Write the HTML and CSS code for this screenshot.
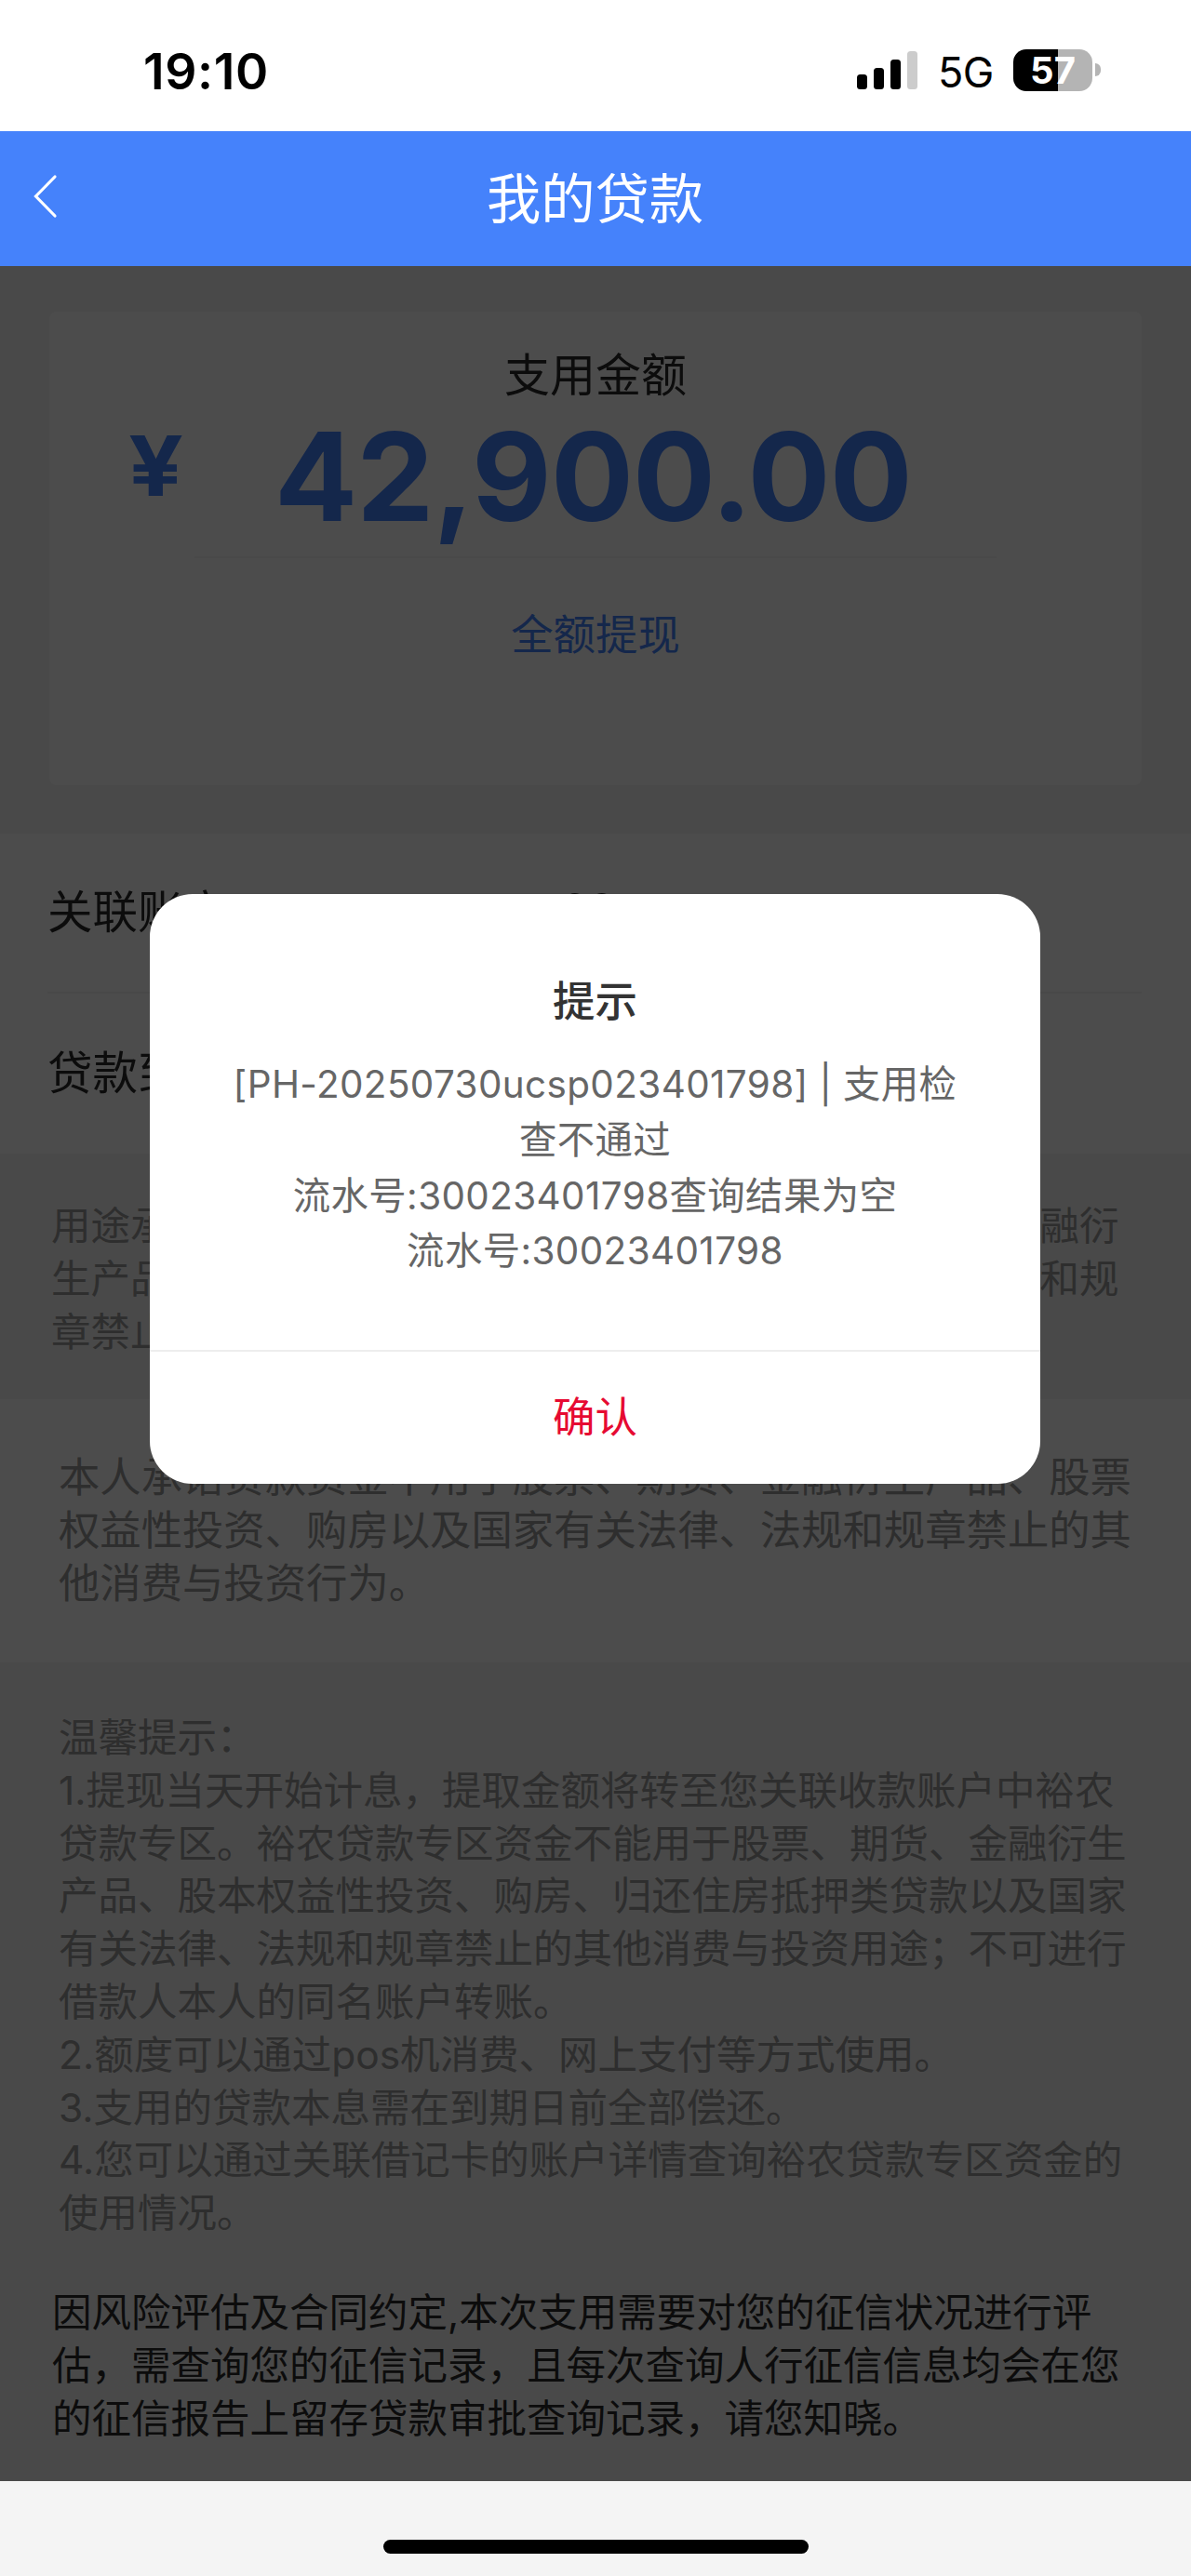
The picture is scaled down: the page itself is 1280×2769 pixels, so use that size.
FILE: index.html
```html
<!DOCTYPE html>
<html lang="zh-CN">
<head>
<meta charset="utf-8">
<title>我的贷款</title>
<link rel="stylesheet" href="styles.css">
</head>
<body>
<div class="statusbar">
  <span class="time">19:10</span>
  <div class="indicators">
    <svg class="signal" width="66" height="42" viewBox="0 0 66 42"><rect x="0" y="25" width="11" height="16" rx="3.5"/><rect x="18" y="18" width="11" height="23" rx="3.5"/><rect x="36" y="9" width="11" height="32" rx="3.5"/><rect x="54" y="0" width="11" height="41" rx="3.5" fill="#ccc"/></svg>
    <span class="network">5G</span>
    <span class="battery">57</span>
    <i class="nub"></i>
  </div>
</div>
<header class="navbar">
  <svg class="back" width="26" height="48" viewBox="0 0 26 48"><path d="M23 3 2.5 24 23 45" fill="none" stroke="#fff" stroke-width="3.2" stroke-linecap="round"/></svg>
  <h1>我的贷款</h1>
</header>
<main class="page">
  <section class="amount-area">
    <div class="card">
      <div class="label">支用金额</div>
      <div class="amount"><span class="yen">¥</span><span class="value">42,900.00</span></div>
      <div class="withdraw">全额提现</div>
    </div>
  </section>
  <section class="fields">
    <div class="field"><span>关联账户</span><span class="field-value">62</span></div>
    <div class="field"><span>贷款到期日</span></div>
  </section>
  <p class="pledge">用途承诺：本人承诺该笔贷款资金不用于股票、期货、金融衍<br>生产品、股本权益性投资、购房以及国家有关法律、法规和规<br>章禁止的其他消费与投资行为。</p>
  <p class="statement">本人承诺贷款资金不用于股票、期货、金融衍生产品、股票<br>权益性投资、购房以及国家有关法律、法规和规章禁止的其<br>他消费与投资行为。</p>
  <p class="tips">温馨提示：<br>1.提现当天开始计息，提取金额将转至您关联收款账户中裕农<br>贷款专区。裕农贷款专区资金不能用于股票、期货、金融衍生<br>产品、股本权益性投资、购房、归还住房抵押类贷款以及国家<br>有关法律、法规和规章禁止的其他消费与投资用途；不可进行<br>借款人本人的同名账户转账。<br>2.额度可以通过pos机消费、网上支付等方式使用。<br>3.支用的贷款本息需在到期日前全部偿还。<br>4.您可以通过关联借记卡的账户详情查询裕农贷款专区资金的<br>使用情况。</p>
  <p class="notice">因风险评估及合同约定,本次支用需要对您的征信状况进行评<br>估，需查询您的征信记录，且每次查询人行征信信息均会在您<br>的征信报告上留存贷款审批查询记录，请您知晓。</p>
  <div class="mask">
    <div class="dialog">
      <h2>提示</h2>
      <p class="message">[PH-20250730ucsp023401798] | 支用检<br>查不通过<br>流水号:30023401798查询结果为空<br>流水号:30023401798</p>
      <div class="confirm">确认</div>
    </div>
  </div>
</main>
<footer class="home"><i></i></footer>
</body>
</html>
```
FILE: styles.css
```css
* { box-sizing: border-box; }
body {
  margin: 0;
  width: 1280px;
  height: 2769px;
  overflow: hidden;
  display: flex;
  flex-direction: column;
  background: #fff;
  font-family: Inter, "Noto Sans CJK SC", sans-serif;
  white-space: nowrap;
}
h1, h2, p { margin: 0; font-weight: 400; }

.statusbar {
  height: 141px;
  display: flex;
  justify-content: space-between;
  padding: 0 97px 0 154px;
}
.time { font-size: 53.5px; font-weight: 600; line-height: 64px; padding-top: 45px; letter-spacing: .6px; }
.indicators { display: flex; align-items: flex-start; }
.signal { margin-top: 55px; }
.network { font-size: 45px; line-height: 54px; margin: 51px 0 0 21px; letter-spacing: -.5px; width: 81px; }
.battery {
  width: 85px;
  height: 45px;
  margin-top: 53px;
  border-radius: 14px;
  background: linear-gradient(90deg, #000 57%, #b4b4b4 57%);
  color: #fff;
  font-size: 40px;
  font-weight: 700;
  line-height: 45px;
  text-align: center;
}
.nub { width: 6px; height: 14px; margin: 68px 0 0 3px; border-radius: 0 6px 6px 0; background: #b4b4b4; }

.navbar {
  height: 145px;
  background: #4582fb;
  color: #fff;
  display: grid;
  grid-template-columns: 1fr auto 1fr;
  align-items: center;
  padding: 0 37px 0 36px;
}
.back { margin-bottom: 6px; }
.navbar h1 { font-size: 58.3px; line-height: 84px; }

.page { position: relative; height: 2381px; background: #f4f4f4; color: #2b2b2b; }
.mask {
  position: absolute;
  inset: 0;
  background: rgba(0, 0, 0, .7);
  display: flex;
  justify-content: center;
  align-items: flex-start;
  padding: 675px 1px 0 0;
}

.amount-area { height: 610px; padding: 49px 53px 0; }
.card { height: 509px; background: #fff; border-radius: 8px; text-align: center; }
.label { font-size: 49px; line-height: 70px; padding-top: 34px; }
.amount {
  display: flex;
  width: 862px;
  height: 161px;
  margin: 0 auto;
  border-bottom: 2px solid #f4f4f4;
  color: #4582fb;
  font-weight: 700;
}
.yen { font-size: 90px; line-height: 110px; width: 60px; margin: 7px 102px 0 -76px; transform: scaleX(1.15); transform-origin: left; }
.value { font-size: 132px; line-height: 160px; letter-spacing: -.9px; margin-top: -7px; }
.withdraw { font-size: 45.4px; line-height: 66px; padding-top: 50px; color: #4582fb; }

.fields { height: 344px; padding: 0 53px 0 51px; background: #fff; }
.field { height: 172px; padding-bottom: 8px; display: flex; align-items: center; font-size: 48.5px; }
.field:first-child { border-bottom: 2px solid #f0f0f0; }
.field-value { margin-left: 357px; }

.pledge { height: 264px; padding: 50px 55px 0; font-size: 42.5px; line-height: 56.8px; color: #999; }
.statement { height: 283px; padding: 56px 63px 0; background: #fff; font-size: 44.35px; line-height: 56.8px; color: #999; }
.tips { height: 670px; padding: 53px 63px 0; font-size: 42.5px; line-height: 56.8px; color: #999; }
.notice { padding: 0 56px; font-size: 42.5px; line-height: 57px; }

.dialog {
  width: 957px;
  height: 634px;
  border-radius: 46px;
  background: #fff;
  color: #333;
  text-align: center;
  display: flex;
  flex-direction: column;
}
.dialog h2 { font-size: 45.5px; font-weight: 500; line-height: 66px; padding-top: 83px; }
.message { flex: 1; padding-top: 26px; font-size: 40.4px; letter-spacing: .4px; line-height: 59.8px; color: #666; }
.confirm { height: 144px; border-top: 2px solid #ededed; font-size: 45.5px; line-height: 142px; color: #e60a32; }

.home { flex: 1; background: #f4f4f4; display: flex; justify-content: center; padding-top: 63px; }
.home i { width: 457px; height: 15px; border-radius: 8px; background: #000; }
```
